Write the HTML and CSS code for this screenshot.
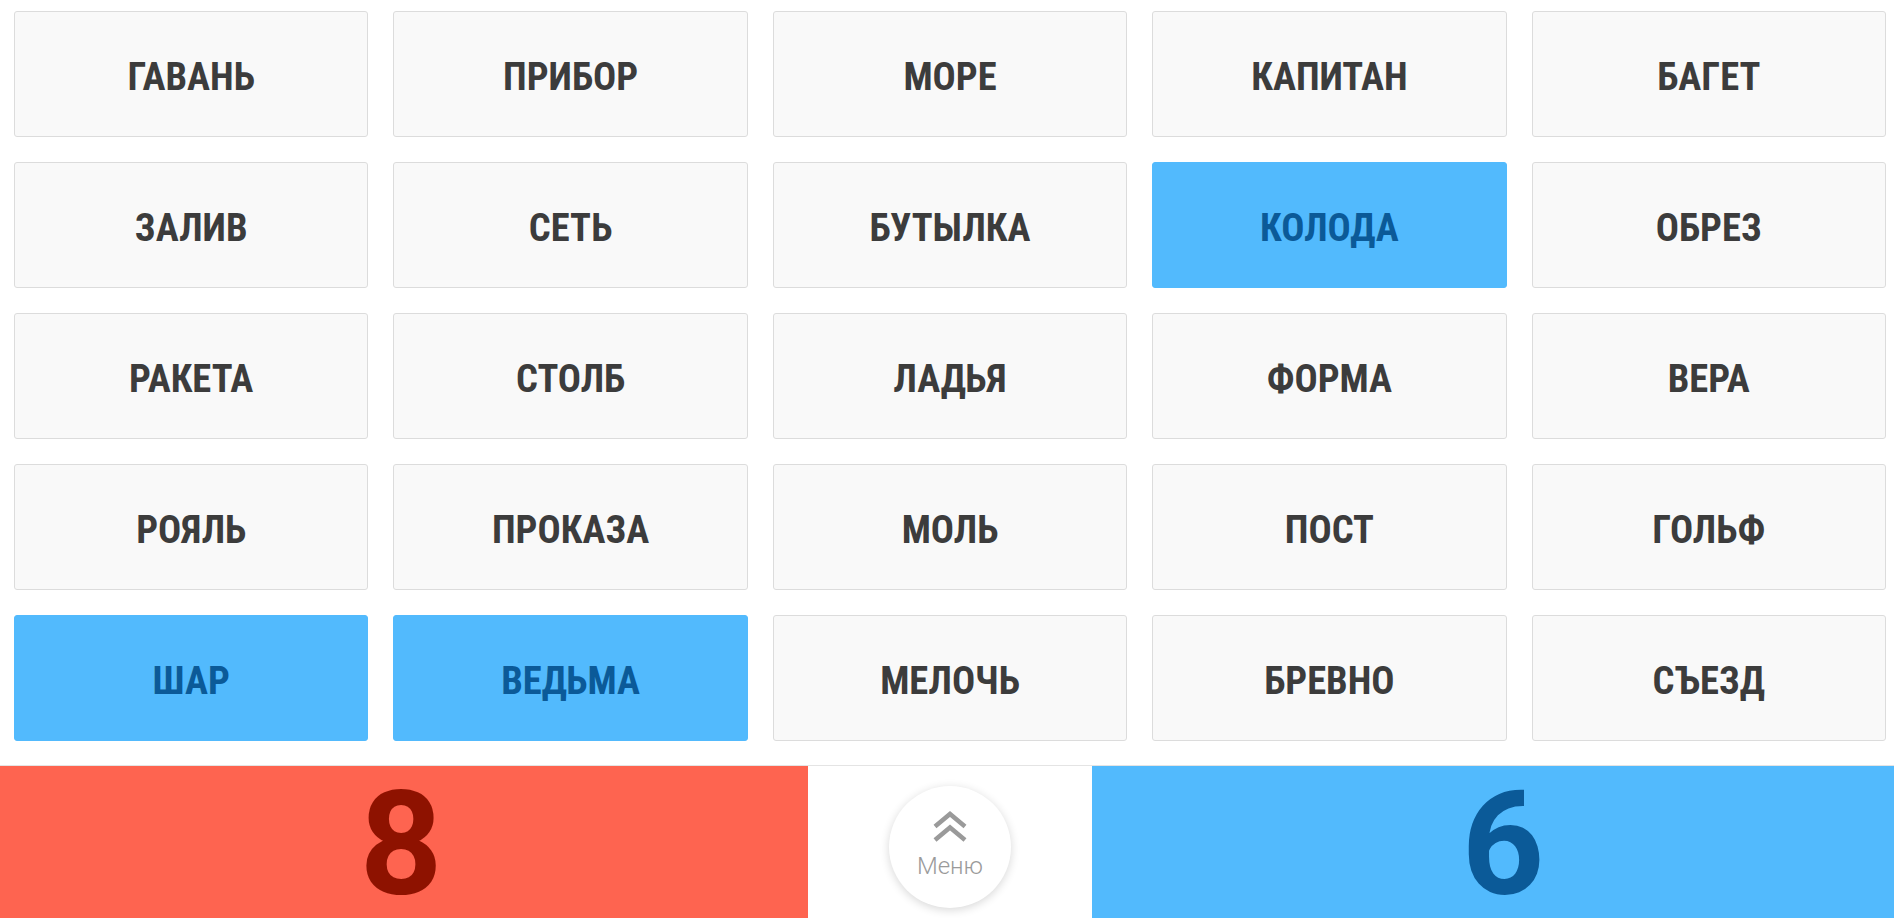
FILE: index.html
```html
<!DOCTYPE html>
<html lang="ru">
<head>
<meta charset="utf-8">
<title>Слова</title>
<link rel="stylesheet" href="styles.css">
</head>
<body>
<div class="board">
  <div class="card"><span class="word">ГАВАНЬ</span></div>
  <div class="card"><span class="word">ПРИБОР</span></div>
  <div class="card"><span class="word">МОРЕ</span></div>
  <div class="card"><span class="word">КАПИТАН</span></div>
  <div class="card"><span class="word">БАГЕТ</span></div>
  <div class="card"><span class="word">ЗАЛИВ</span></div>
  <div class="card"><span class="word">СЕТЬ</span></div>
  <div class="card"><span class="word">БУТЫЛКА</span></div>
  <div class="card blue"><span class="word">КОЛОДА</span></div>
  <div class="card"><span class="word">ОБРЕЗ</span></div>
  <div class="card"><span class="word">РАКЕТА</span></div>
  <div class="card"><span class="word">СТОЛБ</span></div>
  <div class="card"><span class="word">ЛАДЬЯ</span></div>
  <div class="card"><span class="word">ФОРМА</span></div>
  <div class="card"><span class="word">ВЕРА</span></div>
  <div class="card"><span class="word">РОЯЛЬ</span></div>
  <div class="card"><span class="word">ПРОКАЗА</span></div>
  <div class="card"><span class="word">МОЛЬ</span></div>
  <div class="card"><span class="word">ПОСТ</span></div>
  <div class="card"><span class="word">ГОЛЬФ</span></div>
  <div class="card blue"><span class="word">ШАР</span></div>
  <div class="card blue"><span class="word">ВЕДЬМА</span></div>
  <div class="card"><span class="word">МЕЛОЧЬ</span></div>
  <div class="card"><span class="word">БРЕВНО</span></div>
  <div class="card"><span class="word">СЪЕЗД</span></div>
</div>
<div class="footer">
  <div class="score red-score"><span class="num">8</span></div>
  <div class="middle">
    <div class="menu-btn">
      <svg class="chev" width="36" height="33" viewBox="0 0 36 33">
        <polyline points="3,15.5 18,3 33,15.5" fill="none" stroke="#9a9a9a" stroke-width="4.5"/>
        <polyline points="3,29 18,16.5 33,29" fill="none" stroke="#9a9a9a" stroke-width="4.5"/>
      </svg>
      <span class="menu-label">Меню</span>
    </div>
  </div>
  <div class="score blue-score"><span class="num">6</span></div>
</div>
</body>
</html>
```

FILE: styles.css
```css
* { box-sizing: border-box; }
html, body { margin: 0; padding: 0; background: #ffffff; }
body { width: 1894px; height: 918px; overflow: hidden; font-family: Roboto, "Noto Sans", sans-serif; }

.board {
  display: grid;
  grid-template-columns: repeat(5, 1fr);
  grid-auto-rows: 126px;
  column-gap: 25px;
  row-gap: 25px;
  padding: 11px 8px 24px 14px;
}

.card {
  display: flex;
  align-items: center;
  justify-content: center;
  padding-top: 4px;
  background: #f9f9f9;
  border: 1px solid #dcdcdc;
  border-radius: 3px;
}

.word {
  font-family: Roboto, "Liberation Sans Narrow", sans-serif;
  font-stretch: 87.5%;
  font-weight: 700;
  font-size: 38.5px;
  color: #3c3c3c;
}

.card.blue {
  background: #52bafd;
  border-color: #52bafd;
}
.card.blue .word { color: #0b5a98; }

.footer {
  display: flex;
  height: 153px;
  border-top: 1px solid #e4e4e4;
}

.score {
  display: flex;
  align-items: center;
  justify-content: center;
  padding-top: 6px;
}
.num {
  font-family: Roboto, sans-serif;
  font-weight: 700;
  font-stretch: 92%;
  font-size: 144px;
  line-height: 144px;
}
.red-score { width: 808px; background: #fe6450; color: #8e1200; padding-right: 6px; }
.blue-score { width: 802px; background: #52bafd; color: #0b5a98; padding-left: 20px; }

.middle {
  width: 284px;
  display: flex;
  justify-content: center;
  padding-top: 20px;
  background: #fff;
}

.menu-btn {
  width: 122px;
  height: 122px;
  border-radius: 50%;
  background: #fff;
  box-shadow: 0 2px 10px rgba(0,0,0,0.16);
  display: flex;
  flex-direction: column;
  align-items: center;
  padding-top: 25px;
}

.chev { display: block; }

.menu-label {
  font-family: Roboto, sans-serif;
  font-weight: 300;
  font-size: 24px;
  line-height: 26px;
  color: #9a9a9a;
  margin-top: 9px;
}
```
